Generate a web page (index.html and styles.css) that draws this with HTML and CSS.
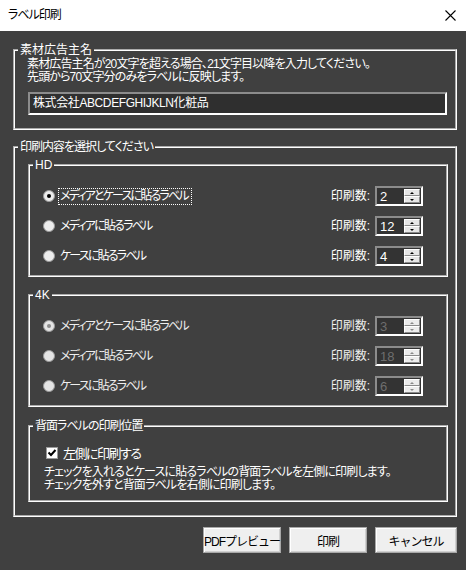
FILE: index.html
```html
<!DOCTYPE html>
<html lang="ja">
<head>
    <meta charset="UTF-8">
    <meta name="viewport" content="width=device-width, initial-scale=1.0">
    <title>ラベル印刷</title>
    <link rel="stylesheet" href="styles.css">
</head>
<body>
    <div class="titlebar">
        <span class="title">ラベル印刷</span>
        <svg class="close" width="11" height="11" viewBox="0 0 11 11">
            <path d="M0.5 0.5 L10.5 10.5 M10.5 0.5 L0.5 10.5" stroke="#000" stroke-width="1.1" fill="none"/>
        </svg>
    </div>

    <div class="dialog">
        <fieldset class="group">
            <legend class="group-title">素材広告主名</legend>
            <div class="group-body first">
                <p class="note">素材広告主名が20文字を超える場合、21文字目以降を入力してください。<br>先頭から70文字分のみをラベルに反映します。</p>
                <div class="textbox">株式会社ABCDEFGHIJKLN化粧品</div>
            </div>
        </fieldset>

        <fieldset class="group second">
            <legend class="group-title narrow">印刷内容を選択してください</legend>
            <div class="group-body">
                <fieldset class="group sub hd">
                    <legend class="group-title">HD</legend>
                    <div class="sub-body">
                        <div class="row">
                            <label class="option"><span class="radio on"></span><span class="focus">メディアとケースに貼るラベル</span></label>
                            <div class="count"><span>印刷数:</span><div class="spin"><span class="spin-value">2</span><span class="spin-btns"><span class="spin-btn up"></span><span class="spin-btn down"></span></span></div></div>
                        </div>
                        <div class="row">
                            <label class="option"><span class="radio"></span><span>メディアに貼るラベル</span></label>
                            <div class="count"><span>印刷数:</span><div class="spin"><span class="spin-value">12</span><span class="spin-btns"><span class="spin-btn up"></span><span class="spin-btn down"></span></span></div></div>
                        </div>
                        <div class="row">
                            <label class="option"><span class="radio"></span><span>ケースに貼るラベル</span></label>
                            <div class="count"><span>印刷数:</span><div class="spin"><span class="spin-value">4</span><span class="spin-btns"><span class="spin-btn up"></span><span class="spin-btn down"></span></span></div></div>
                        </div>
                    </div>
                </fieldset>

                <fieldset class="group sub k4 disabled">
                    <legend class="group-title">4K</legend>
                    <div class="sub-body">
                        <div class="row">
                            <label class="option"><span class="radio on"></span><span>メディアとケースに貼るラベル</span></label>
                            <div class="count"><span>印刷数:</span><div class="spin"><span class="spin-value">3</span><span class="spin-btns"><span class="spin-btn up"></span><span class="spin-btn down"></span></span></div></div>
                        </div>
                        <div class="row">
                            <label class="option"><span class="radio"></span><span>メディアに貼るラベル</span></label>
                            <div class="count"><span>印刷数:</span><div class="spin"><span class="spin-value">18</span><span class="spin-btns"><span class="spin-btn up"></span><span class="spin-btn down"></span></span></div></div>
                        </div>
                        <div class="row">
                            <label class="option"><span class="radio"></span><span>ケースに貼るラベル</span></label>
                            <div class="count"><span>印刷数:</span><div class="spin"><span class="spin-value">6</span><span class="spin-btns"><span class="spin-btn up"></span><span class="spin-btn down"></span></span></div></div>
                        </div>
                    </div>
                </fieldset>

                <fieldset class="group sub back">
                    <legend class="group-title narrow">背面ラベルの印刷位置</legend>
                    <div class="back-body">
                        <label class="check-row">
                            <span class="checkbox">
                                <svg width="10" height="10" viewBox="0 0 10 10"><path d="M1.5 4.5 L4 7 L8.5 2" stroke="#000" stroke-width="2" fill="none"/></svg>
                            </span>
                            <span>左側に印刷する</span>
                        </label>
                        <p class="note">チェックを入れるとケースに貼るラベルの背面ラベルを左側に印刷します。<br>チェックを外すと背面ラベルを右側に印刷します。</p>
                    </div>
                </fieldset>
            </div>
        </fieldset>

        <div class="buttons">
            <button class="btn">PDFプレビュー</button>
            <button class="btn">印刷</button>
            <button class="btn wide">キャンセル</button>
        </div>
    </div>
</body>
</html>
```

FILE: styles.css
```css
body {
    margin: 0;
    background-color: #404040;
    color: #fff;
    font-family: "Liberation Sans", "Noto Sans CJK JP", sans-serif;
    font-size: 12px;
    line-height: 13px;
    font-feature-settings: "palt";
}
.titlebar {
    height: 31px;
    background-color: #fff;
    color: #000;
    display: flex;
    align-items: center;
    justify-content: space-between;
    padding: 0 10px 0 8px;
}
.title {
    letter-spacing: -1px;
}
.close {
    margin-top: -1px;
}
.dialog {
    padding: 11px 9px 0 13px;
}
.group {
    margin: 0;
    padding: 0;
    min-width: 0;
    border: 2px groove #fff;
}
.group-title {
    margin-left: 3px;
    padding: 0 2px;
    line-height: 16px;
}
.group-title.narrow {
    letter-spacing: -1px;
}
.group-body {
    padding: 0 7px 13px 13px;
}
.group-body.first {
    padding: 0 8px 13px 12px;
}
.note {
    margin: 0;
    letter-spacing: -0.85px;
}
.textbox {
    margin: 8px 0 0 1px;
    height: 23px;
    box-sizing: border-box;
    border: 2px solid;
    border-color: #8c8c8c #fff #fff #8c8c8c;
    background-color: #2f2f2f;
    padding: 0 3px;
    line-height: 19px;
    letter-spacing: -0.4px;
}
.second {
    margin-top: 9px;
}
.sub {
    margin-top: 2px;
}
.k4 {
    margin-top: 10px;
}
.back {
    margin-top: 11px;
}
.sub-body {
    padding: 8px 23px 4px 13px;
}
.row {
    height: 30px;
    display: flex;
    align-items: center;
    justify-content: space-between;
}
.option {
    display: flex;
    align-items: center;
    gap: 5px;
    letter-spacing: -1.8px;
}
.radio {
    width: 12px;
    height: 12px;
    box-sizing: border-box;
    border-radius: 50%;
    border: 1px solid #9a9a9a;
    background-color: #ececec;
    display: flex;
    align-items: center;
    justify-content: center;
}
.radio.on::after {
    content: "";
    width: 4px;
    height: 4px;
    border-radius: 50%;
    background-color: #000;
}
.disabled .radio {
    background-color: #e4e4e4;
}
.disabled .radio.on::after {
    background-color: #8a8a8a;
}
.disabled .option,
.disabled .count {
    color: #eee;
}
.focus {
    outline: 1px dotted #fff;
    outline-offset: 1px;
    padding-right: 2px;
}
.count {
    display: flex;
    align-items: center;
    gap: 5px;
}
.spin {
    width: 48px;
    height: 20px;
    box-sizing: border-box;
    border: 2px solid;
    border-color: #8c8c8c #fff #fff #8c8c8c;
    background-color: #333;
    display: flex;
}
.spin-value {
    flex: 1;
    padding-left: 3px;
    line-height: 17px;
    font-size: 13px;
}
.disabled .spin-value {
    color: #6e6e6e;
}
.spin-btns {
    width: 16px;
    display: flex;
    flex-direction: column;
    padding: 1px 1px 1px 0;
}
.spin-btn {
    flex: 1;
    box-sizing: border-box;
    background-color: #e6e6e6;
    border: 1px solid;
    border-color: #fff #8a8a8a #8a8a8a #fff;
    display: flex;
    align-items: center;
    justify-content: center;
}
.spin-btn::after {
    content: "";
    border-left: 2px solid transparent;
    border-right: 2px solid transparent;
}
.spin-btn.up::after {
    border-bottom: 2px solid #000;
}
.spin-btn.down::after {
    border-top: 2px solid #000;
}
.disabled .spin-btn {
    background-color: #ececec;
}
.disabled .spin-btn.up::after {
    border-bottom-color: #8a8a8a;
}
.disabled .spin-btn.down::after {
    border-top-color: #8a8a8a;
}
.back-body {
    padding: 11px 8px 8px 15px;
}
.check-row {
    height: 16px;
    display: flex;
    align-items: center;
    gap: 5px;
    margin-left: 1px;
    margin-bottom: 5px;
    font-size: 13px;
    letter-spacing: -1.5px;
}
.checkbox {
    width: 12px;
    height: 12px;
    box-sizing: border-box;
    border: 1px solid #9a9a9a;
    background-color: #fff;
    display: flex;
    align-items: center;
    justify-content: center;
}
.back-body .note {
    margin-left: -1px;
}
.buttons {
    display: flex;
    justify-content: flex-end;
    gap: 8px;
    margin-top: 10px;
}
.btn {
    width: 78px;
    height: 26px;
    box-sizing: border-box;
    background-color: #efefef;
    border: 1px solid #a8a8a8;
    box-shadow: inset 1px 1px 0 #fff, inset -1px -1px 0 #d0d0d0;
    font-family: inherit;
    font-size: 12px;
    letter-spacing: -1px;
    color: #000;
    padding: 0;
}
.btn.wide {
    width: 82px;
}
```
